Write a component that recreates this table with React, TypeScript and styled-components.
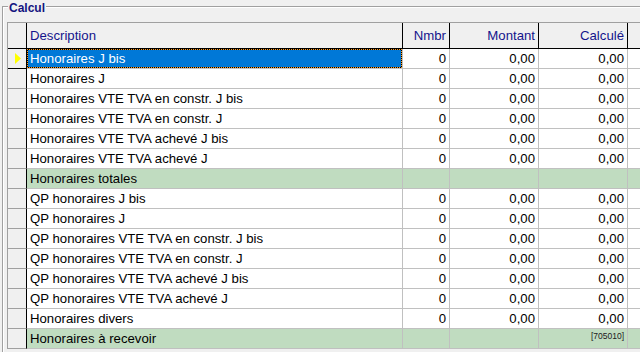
import React from 'react';
import styled, { createGlobalStyle } from 'styled-components';

const GlobalStyle = createGlobalStyle`
  html, body {
    margin: 0;
    padding: 0;
    background: #f0f0f0;
    overflow: hidden;
  }
  body {
    font-family: "Liberation Sans", Arial, sans-serif;
    font-size: 13.2px;
  }
`;

const Page = styled.div`
  width: 640px;
  height: 352px;
  overflow: hidden;
  padding: 6px 0 0 2px;
  box-sizing: border-box;
`;

const GroupBox = styled.div`
  position: relative;
  width: 720px;
  height: 400px;
  border-top: 1px solid #a0a0a0;
  border-left: 1px solid #a0a0a0;
  box-shadow: inset 1px 1px 0 #ffffff;
  padding: 15px 0 0 4px;
  box-sizing: border-box;
`;

const Legend = styled.div`
  position: absolute;
  top: -6px;
  left: 5px;
  padding: 0 1px;
  background: #f0f0f0;
  color: #14147f;
  font-weight: bold;
  font-size: 12px;
  line-height: 14px;
`;

const Grid = styled.div`
  border-top: 1px solid #a0a0a0;
  border-left: 1px solid #a0a0a0;
  background: #ffffff;
`;

const Row = styled.div<{ header?: boolean }>`
  display: grid;
  grid-template-columns: 19px 376px 47px 89px 89px 1fr;
  height: ${({ header }) => (header ? 26 : 20)}px;
`;

const Indicator = styled.div<{ header?: boolean; current?: boolean }>`
  box-sizing: border-box;
  background: #f0f0f0;
  border-right: 1px solid #000000;
  border-bottom: 1px solid ${({ header, current }) => (header || current ? '#000000' : '#a0a0a0')};
  display: flex;
  align-items: center;
  padding-left: 7px;
`;

const HeadCell = styled.div<{ align?: 'left' | 'right'; last?: boolean }>`
  box-sizing: border-box;
  background: #f0f0f0;
  color: #14148c;
  border-right: 1px solid ${({ last }) => (last ? 'transparent' : '#000000')};
  border-bottom: 1px solid #000000;
  line-height: 26px;
  padding: 0 3px;
  text-align: ${({ align }) => align || 'left'};
  white-space: nowrap;
  overflow: hidden;
`;

const Cell = styled.div<{ align?: 'left' | 'right'; total?: boolean; selected?: boolean }>`
  position: relative;
  box-sizing: border-box;
  background: ${({ total, selected }) => (selected ? '#0078d7' : total ? '#c0dcc0' : '#ffffff')};
  color: ${({ selected }) => (selected ? '#ffffff' : '#000000')};
  border-right: 1px solid #c0c0c0;
  border-bottom: 1px solid #c0c0c0;
  line-height: 20px;
  padding: 0 3px;
  text-align: ${({ align }) => align || 'left'};
  white-space: nowrap;
  overflow: hidden;

  ${({ selected }) => selected && `
    box-shadow: inset 0 0 0 1px #000000;
    &::after {
      content: '';
      position: absolute;
      inset: 0;
      border: 1px dotted #ff9a1a;
    }
  `}
`;

const Code = styled.span`
  display: block;
  font-size: 8.5px;
  line-height: 10px;
  padding-top: 2px;
  color: #202020;
`;

type Line = { label: string; total?: boolean; code?: string };

const lines: Line[] = [
  { label: 'Honoraires J bis' },
  { label: 'Honoraires J' },
  { label: 'Honoraires VTE TVA en constr. J bis' },
  { label: 'Honoraires VTE TVA en constr. J' },
  { label: 'Honoraires VTE TVA achevé J bis' },
  { label: 'Honoraires VTE TVA achevé J' },
  { label: 'Honoraires totales', total: true },
  { label: 'QP honoraires J bis' },
  { label: 'QP honoraires J' },
  { label: 'QP honoraires VTE TVA en constr. J bis' },
  { label: 'QP honoraires VTE TVA en constr. J' },
  { label: 'QP honoraires VTE TVA achevé J bis' },
  { label: 'QP honoraires VTE TVA achevé J' },
  { label: 'Honoraires divers' },
  { label: 'Honoraires à recevoir', total: true, code: '[705010]' },
];

const Arrow = () => (
  <svg width="6" height="11" viewBox="0 0 6 11">
    <polygon points="0,0 6,5.5 0,11" fill="#ffff00" />
  </svg>
);

const App = () => {
  return (
    <Page>
      <GlobalStyle />
      <GroupBox>
        <Legend>Calcul</Legend>
        <Grid>
          <Row header>
            <Indicator header />
            <HeadCell>Description</HeadCell>
            <HeadCell align="right">Nmbr</HeadCell>
            <HeadCell align="right">Montant</HeadCell>
            <HeadCell align="right">Calculé</HeadCell>
            <HeadCell last />
          </Row>
          {lines.map((line, i) => (
            <Row key={line.label}>
              <Indicator current={i === 0}>{i === 0 && <Arrow />}</Indicator>
              <Cell total={line.total} selected={i === 0}>{line.label}</Cell>
              <Cell total={line.total} align="right">{line.total ? '' : '0'}</Cell>
              <Cell total={line.total} align="right">{line.total ? '' : '0,00'}</Cell>
              <Cell total={line.total} align="right">
                {line.code ? <Code>{line.code}</Code> : line.total ? '' : '0,00'}
              </Cell>
              <Cell total={line.total} />
            </Row>
          ))}
        </Grid>
      </GroupBox>
    </Page>
  );
};

export default App;
